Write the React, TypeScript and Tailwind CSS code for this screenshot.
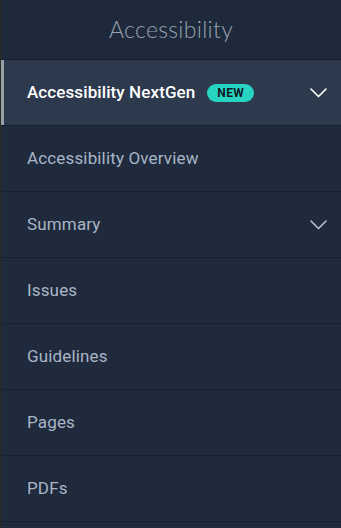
const items = [
    { label: "Accessibility Overview" },
    { label: "Summary", expandable: true },
    { label: "Issues" },
    { label: "Guidelines" },
    { label: "Pages" },
    { label: "PDFs" },
]

const Chevron = ({ className }: { className?: string }) => (
    <svg width="17" height="10" viewBox="0 0 17 10" fill="none" className={className}>
        <path d="M1 1 L8.5 8.5 L16 1" stroke="currentColor" strokeWidth="1.6" strokeLinecap="round" strokeLinejoin="round" />
    </svg>
)

export default function App() {
    return (
        <div className="h-[528px] w-[341px] bg-[#1f2a3d] font-['Roboto',sans-serif] overflow-hidden flex">
            <div className="w-px bg-[#2a2c24]" />
            <div className="flex-1 flex flex-col">
                {/* Header */}
                <div className="h-[60px] shrink-0 flex items-center justify-center border-b border-[#162031] bg-[#1e2a3c]">
                    <span className="text-[23px] font-light tracking-[0.3px] text-[#98a2b0] font-['Lato',sans-serif]">
                        Accessibility
                    </span>
                </div>

                {/* Active section */}
                <div className="h-[66px] shrink-0 flex items-center bg-[#2d394d] border-b border-[#162031]">
                    <div className="w-[3px] h-full bg-[#9aa0a8]" />
                    <div className="flex-1 flex items-center pl-[23px] pr-[14px]">
                        <span className="text-[17px] font-medium text-white tracking-[0.1px]">Accessibility NextGen</span>
                        <span className="ml-[12px] h-[18px] px-[10px] flex items-center rounded-full bg-[#27d3c1] text-[12px] font-bold text-[#0f1b24] tracking-[0.3px]">
                            NEW
                        </span>
                        <Chevron className="ml-auto text-white" />
                    </div>
                </div>

                {items.map((item) => (
                    <div
                        key={item.label}
                        className="h-[66px] shrink-0 flex items-center pl-[26px] pr-[14px] border-b border-[#162031]"
                    >
                        <span className="text-[17px] text-[#a9b6c6] tracking-[0.15px]">{item.label}</span>
                        {item.expandable && <Chevron className="ml-auto text-[#b8c2cf]" />}
                    </div>
                ))}
            </div>
        </div>
    )
}
